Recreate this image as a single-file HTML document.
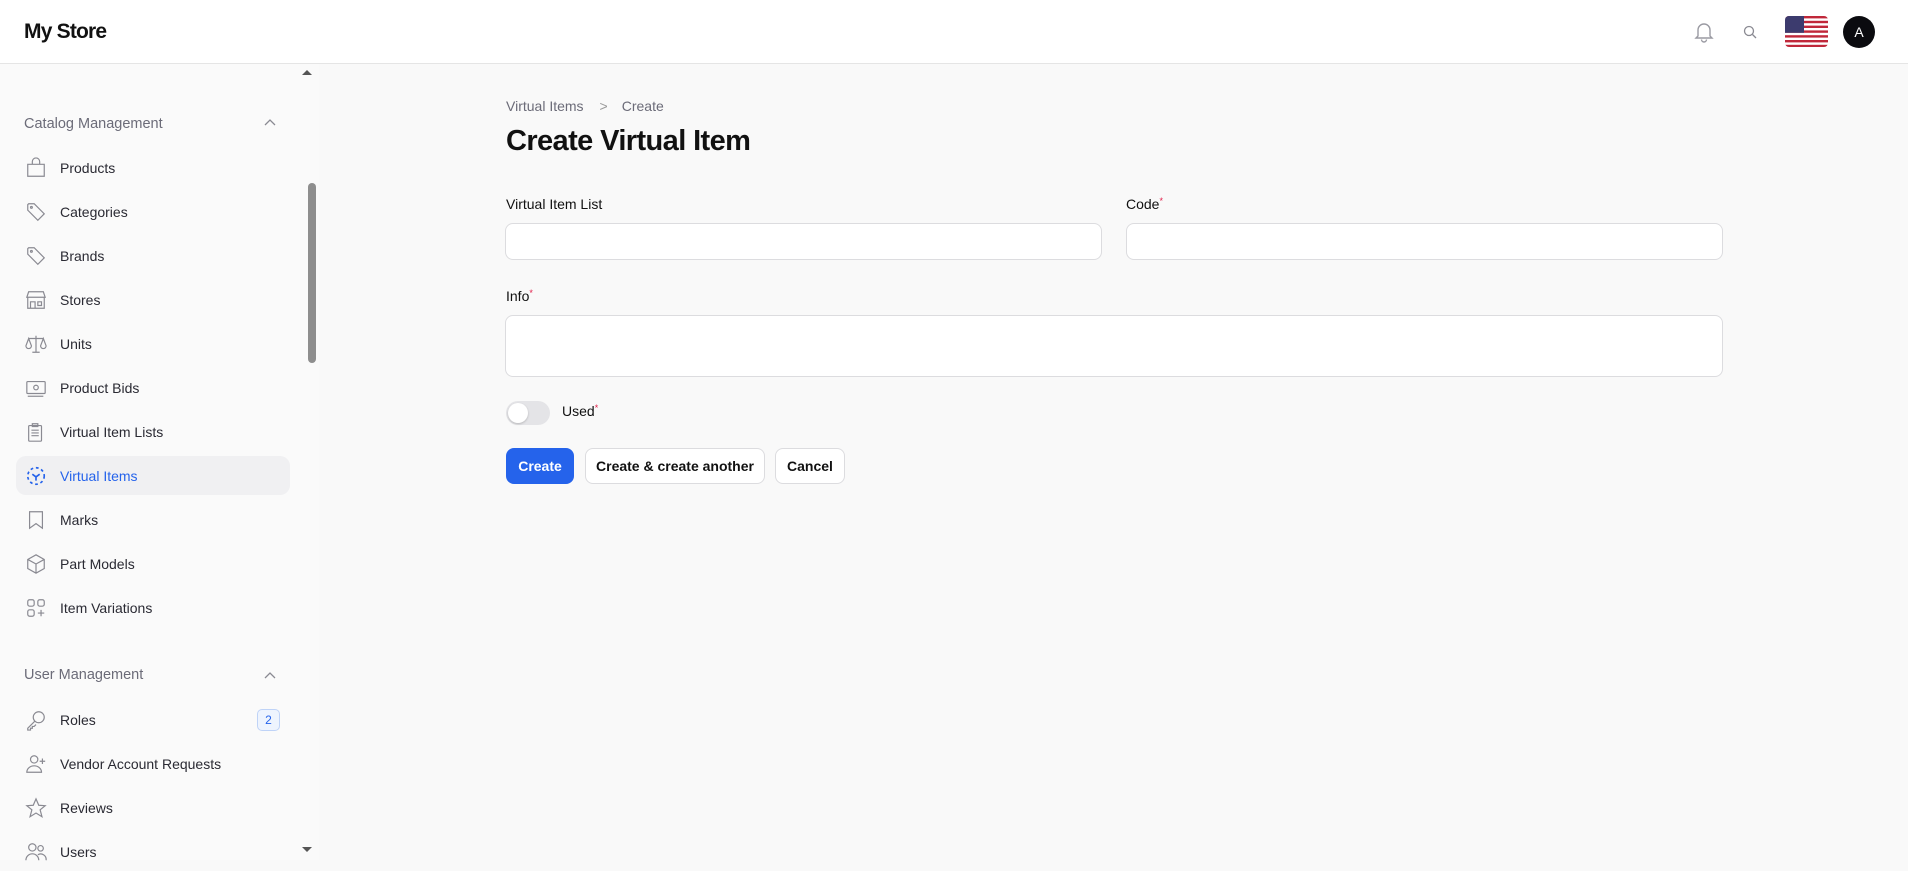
<!DOCTYPE html>
<html><head><meta charset="utf-8"><style>
*{box-sizing:border-box;margin:0;padding:0}
body{width:1908px;height:860px;overflow:hidden;background:#f9f9f9;font-family:"Liberation Sans",sans-serif;color:#111;position:relative}
.hdr{position:absolute;left:0;top:0;width:1908px;height:64px;background:#fff;border-bottom:1px solid #e5e5e5}
.logo{position:absolute;left:24px;top:20px;font-size:21px;font-weight:bold;letter-spacing:-0.8px}
.side{position:absolute;left:0;top:64px;width:319px;height:796px;background:#fafafa}
.grp{position:absolute;left:24px;font-size:14.5px;color:#6b6b78}
.chev{position:absolute;left:264px}
.it{position:absolute;left:16px;width:274px;height:39px;display:flex;align-items:center;font-size:14px;color:#2a2a33}
.it svg{position:absolute;left:9px;width:22px;height:22px}
.it span{position:absolute;left:44px}
.act{background:#f0f0f2;border-radius:10px;color:#2563eb}
.badge{position:absolute;left:241px;width:23px;height:22px;border:1px solid #bfd3f7;background:#eef4fe;border-radius:5px;color:#2563eb;font-size:12px;text-align:center;line-height:20px}
.sb{position:absolute;left:308px;top:119px;width:8px;height:180px;background:#8e8e8e;border-radius:4px}
.main{position:absolute;left:506px}
.lbl{position:absolute;font-size:14px;color:#111}
.req{color:#e11d48;font-size:9px;vertical-align:top}
.inp{position:absolute;background:#fff;border:1px solid #dcdcdf;border-radius:8px}
.btn{position:absolute;top:448px;height:36px;border-radius:8px;font-size:14px;font-weight:bold;display:flex;align-items:center;justify-content:center}
</style></head><body>
<div class="hdr">
<div class="logo">My Store</div>
<svg style="position:absolute;left:1694px;top:21px" width="20" height="22" viewBox="0 0 20 22" fill="none" stroke="#9a9aa2" stroke-width="1.4"><path d="M4 15V9a6 6 0 0 1 12 0v6l2 2H2z"/><path d="M7.5 18.5a2.5 2.5 0 0 0 5 0"/></svg>
<svg style="position:absolute;left:1743px;top:25px" width="14" height="14" viewBox="0 0 14 14" fill="none" stroke="#8a8a92" stroke-width="1.3"><circle cx="6" cy="6" r="4.5"/><path d="M9.5 9.5L13 13"/></svg>
<svg style="position:absolute;left:1785px;top:16px" width="43" height="31" viewBox="0 0 43 31"><defs><clipPath id="c"><rect width="43" height="31" rx="4"/></clipPath></defs><g clip-path="url(#c)"><rect width="43" height="31" fill="#fff"/><g fill="#c0283a"><rect y="0" width="43" height="2.4"/><rect y="4.8" width="43" height="2.4"/><rect y="9.6" width="43" height="2.4"/><rect y="14.4" width="43" height="2.4"/><rect y="19.2" width="43" height="2.4"/><rect y="24" width="43" height="2.4"/><rect y="28.8" width="43" height="2.4"/></g><rect width="19" height="16.8" fill="#3c3b6e"/></g></svg>
<div style="position:absolute;left:1843px;top:16px;width:32px;height:32px;border-radius:50%;background:#0b0b0f;color:#fff;font-size:14px;text-align:center;line-height:32px">A</div>
</div>
<div class="side">
<div style="position:absolute;left:302px;top:6px;width:0;height:0;border-left:5px solid transparent;border-right:5px solid transparent;border-bottom:5px solid #555"></div>
<div style="position:absolute;left:302px;top:783px;width:0;height:0;border-left:5px solid transparent;border-right:5px solid transparent;border-top:5px solid #555"></div>
<div class="sb"></div>
</div>
<div class="grp" style="top:116px">Catalog Management</div>
<svg class="chev" style="top:118px" width="12" height="8" viewBox="0 0 12 8" fill="none" stroke="#8a8a92" stroke-width="1.3"><path d="M1 7l5-5 5 5"/></svg>
<div class="it" style="top:148px"><svg viewBox="0 0 24 24" fill="none" stroke="#8a8a92" stroke-width="1.3"><path d="M3 8h18v13H3zM8 8V5a4 4 0 0 1 8 0v3"/></svg><span>Products</span></div>
<div class="it" style="top:192px"><svg viewBox="0 0 24 24" fill="none" stroke="#8a8a92" stroke-width="1.3"><path d="M3 4v6l11 11 7-7L10 3H4z"/><circle cx="7" cy="7" r="1"/></svg><span>Categories</span></div>
<div class="it" style="top:236px"><svg viewBox="0 0 24 24" fill="none" stroke="#8a8a92" stroke-width="1.3"><path d="M3 4v6l11 11 7-7L10 3H4z"/><circle cx="7" cy="7" r="1"/></svg><span>Brands</span></div>
<div class="it" style="top:280px"><svg viewBox="0 0 24 24" fill="none" stroke="#8a8a92" stroke-width="1.3"><path d="M2 9l2-6h16l2 6zM3 9v12h18V9M6 14h5v7H6zM14 14h4v4h-4z"/></svg><span>Stores</span></div>
<div class="it" style="top:324px"><svg viewBox="0 0 24 24" fill="none" stroke="#8a8a92" stroke-width="1.3"><path d="M12 3v18M4 6h16M8 21h8M4 6l-3 8a3 3 0 0 0 6 0zM20 6l-3 8a3 3 0 0 0 6 0z"/></svg><span>Units</span></div>
<div class="it" style="top:368px"><svg viewBox="0 0 24 24" fill="none" stroke="#8a8a92" stroke-width="1.3"><rect x="2" y="5" width="20" height="13" rx="1"/><circle cx="12" cy="11.5" r="2.5"/><path d="M3 21h17"/></svg><span>Product Bids</span></div>
<div class="it" style="top:412px"><svg viewBox="0 0 24 24" fill="none" stroke="#8a8a92" stroke-width="1.3"><rect x="4" y="5" width="14" height="17" rx="1"/><path d="M8 3h6v3H8zM7 10h8M7 13h8M7 16h8"/></svg><span>Virtual Item Lists</span></div>
<div class="it act" style="top:456px"><svg viewBox="0 0 24 24" fill="none" stroke="#2563eb" stroke-width="1.8" stroke-dasharray="3 3"><circle cx="12" cy="12" r="9"/><path d="M8 10l4 3 4-3M12 13v4" stroke-dasharray="none"/></svg><span>Virtual Items</span></div>
<div class="it" style="top:500px"><svg viewBox="0 0 24 24" fill="none" stroke="#8a8a92" stroke-width="1.3"><path d="M5 3h14v18l-7-5-7 5z"/></svg><span>Marks</span></div>
<div class="it" style="top:544px"><svg viewBox="0 0 24 24" fill="none" stroke="#8a8a92" stroke-width="1.3"><path d="M12 2l9 5v10l-9 5-9-5V7zM3 7l9 5 9-5M12 12v10"/></svg><span>Part Models</span></div>
<div class="it" style="top:588px"><svg viewBox="0 0 24 24" fill="none" stroke="#8a8a92" stroke-width="1.3"><rect x="3" y="3" width="7" height="7" rx="2"/><rect x="14" y="3" width="7" height="7" rx="2"/><rect x="3" y="14" width="7" height="7" rx="2"/><path d="M17.5 14v7M14 17.5h7"/></svg><span>Item Variations</span></div>
<div class="grp" style="top:667px">User Management</div>
<svg class="chev" style="top:671px" width="12" height="8" viewBox="0 0 12 8" fill="none" stroke="#8a8a92" stroke-width="1.3"><path d="M1 7l5-5 5 5"/></svg>
<div class="it" style="top:700px"><svg viewBox="0 0 24 24" fill="none" stroke="#8a8a92" stroke-width="1.3"><circle cx="15" cy="9" r="6"/><path d="M11 13l-8 8v2h3v-2h2v-2h2l2-2"/></svg><span>Roles</span><div class="badge">2</div></div>
<div class="it" style="top:744px"><svg viewBox="0 0 24 24" fill="none" stroke="#8a8a92" stroke-width="1.3"><circle cx="10" cy="7" r="4"/><path d="M2 21a8 7 0 0 1 16 0zM19 6v6M16 9h6"/></svg><span>Vendor Account Requests</span></div>
<div class="it" style="top:788px"><svg viewBox="0 0 24 24" fill="none" stroke="#8a8a92" stroke-width="1.3"><path d="M12 2l3 7 7 .5-5.5 4.5 2 7.5-6.5-4-6.5 4 2-7.5L2 9.5 9 9z"/></svg><span>Reviews</span></div>
<div class="it" style="top:832px"><svg viewBox="0 0 24 24" fill="none" stroke="#8a8a92" stroke-width="1.3"><circle cx="8" cy="7" r="4"/><circle cx="17" cy="8" r="3"/><path d="M1 21a7 7 0 0 1 14 0M14 15a6 6 0 0 1 9 6"/></svg><span>Users</span></div>

<div class="main" style="top:98px;font-size:14px;color:#6b6b78">Virtual Items<span style="margin:0 14px 0 16px;color:#999">&gt;</span>Create</div>
<div class="main" style="top:125px;font-size:29px;font-weight:bold;letter-spacing:-0.6px">Create Virtual Item</div>
<div class="lbl" style="left:506px;top:196px">Virtual Item List</div>
<div class="inp" style="left:505px;top:223px;width:597px;height:37px"></div>
<div class="lbl" style="left:1126px;top:196px">Code<span class="req">*</span></div>
<div class="inp" style="left:1126px;top:223px;width:597px;height:37px"></div>
<div class="lbl" style="left:506px;top:288px">Info<span class="req">*</span></div>
<div class="inp" style="left:505px;top:315px;width:1218px;height:62px"></div>
<div style="position:absolute;left:506px;top:401px;width:44px;height:24px;border-radius:12px;background:#e4e4e7"><div style="position:absolute;left:2px;top:2px;width:20px;height:20px;border-radius:50%;background:#fff;box-shadow:0 1px 2px rgba(0,0,0,.2)"></div></div>
<div class="lbl" style="left:562px;top:403px">Used<span class="req">*</span></div>
<div class="btn" style="left:506px;width:68px;background:#2563eb;color:#fff">Create</div>
<div class="btn" style="left:585px;width:180px;background:#fff;border:1px solid #dcdcdf">Create &amp; create another</div>
<div class="btn" style="left:775px;width:70px;background:#fff;border:1px solid #dcdcdf">Cancel</div>
</body></html>
